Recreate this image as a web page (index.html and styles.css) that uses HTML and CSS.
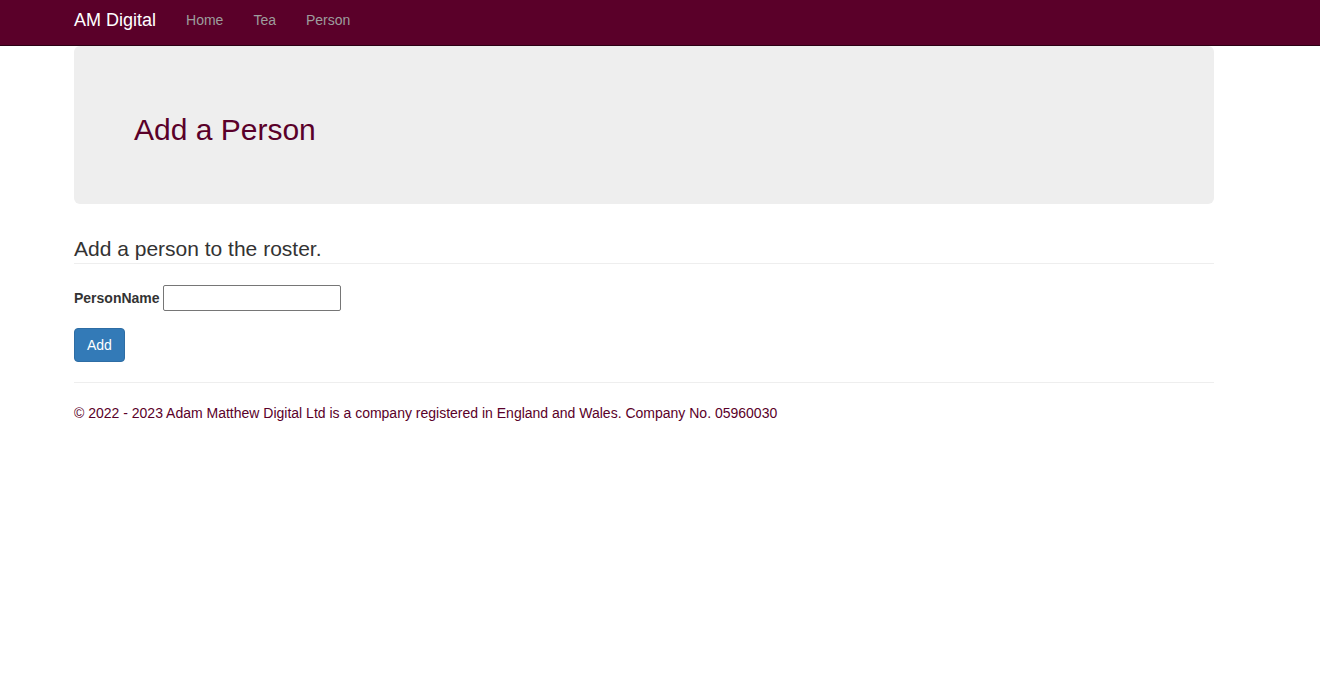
FILE: index.html
```html
<!DOCTYPE html>
<html lang="en">
<head>
<meta charset="utf-8">
<title>Add a Person - AM Digital</title>
<link rel="stylesheet" href="styles.css">
</head>
<body>
<nav class="navbar">
  <div class="container navbar-inner">
    <a class="brand" href="#">AM Digital</a>
    <ul class="nav">
      <li><a href="#">Home</a></li>
      <li><a href="#">Tea</a></li>
      <li><a href="#">Person</a></li>
    </ul>
  </div>
</nav>
<div class="container body-content">
  <div class="jumbotron">
    <h1>Add a Person</h1>
  </div>
  <h2 class="subtitle">Add a person to the roster.</h2>
  <hr class="rule-top">
  <form class="person-form">
    <div class="form-group">
      <label for="PersonName">PersonName</label> <input id="PersonName" type="text" class="text-input">
    </div>
    <button type="button" class="btn-primary">Add</button>
  </form>
  <hr class="rule-footer">
  <footer class="footer">
    <p>© 2022 - 2023 Adam Matthew Digital Ltd is a company registered in England and Wales. Company No. 05960030</p>
  </footer>
</div>
</body>
</html>
```

FILE: styles.css
```css
* { box-sizing: border-box; }
html, body { margin: 0; padding: 0; }
body {
  font-family: "Liberation Sans", Arial, Helvetica, sans-serif;
  font-size: 14px;
  line-height: 20px;
  color: #333333;
  background: #ffffff;
}
.container {
  width: 1140px;
  margin-left: 74px;
}
.navbar {
  background: #5a0029;
  height: 46px;
  border-bottom: 1px solid #2c0014;
}
.navbar-inner {
  display: flex;
  align-items: center;
  height: 45px;
  padding-bottom: 6px;
}
.brand {
  color: #ffffff;
  font-size: 18px;
  line-height: 20px;
  text-decoration: none;
  padding-right: 15px;
}
.nav {
  display: flex;
  list-style: none;
  margin: 0;
  padding: 0;
}
.nav a {
  display: block;
  color: #9d9d9d;
  text-decoration: none;
  padding: 0 15px;
  line-height: 20px;
}
.jumbotron {
  background: #eeeeee;
  border-radius: 6px;
  padding: 48px 60px;
}
.jumbotron h1 {
  margin: 19px 0 10px;
  font-size: 30px;
  line-height: 33px;
  font-weight: normal;
  color: #5a0029;
}
.subtitle {
  margin: 33px 0 3px;
  font-size: 21px;
  line-height: 23px;
  font-weight: normal;
  color: #333333;
}
hr {
  border: 0;
  border-top: 1px solid #eeeeee;
  margin: 0;
  height: 0;
}
.rule-top { margin-bottom: 21px; }
.form-group {
  height: 26px;
  line-height: 26px;
  margin-bottom: 17px;
}
.form-group label {
  font-weight: bold;
  color: #333333;
}
.text-input {
  width: 178px;
  height: 26px;
  border: 1px solid #767676;
  border-radius: 2px;
  padding: 1px 2px;
  vertical-align: top;
  font: 13px "Liberation Sans", Arial, sans-serif;
}
.btn-primary {
  display: block;
  font-family: inherit;
  font-size: 14px;
  line-height: 20px;
  padding: 6px 12px;
  color: #ffffff;
  background: #337ab7;
  border: 1px solid #2e6da4;
  border-radius: 4px;
  height: 34px;
}
.rule-footer { margin-top: 20px; }
.footer p {
  margin: 20px 0 0;
  color: #5a0029;
}
```
